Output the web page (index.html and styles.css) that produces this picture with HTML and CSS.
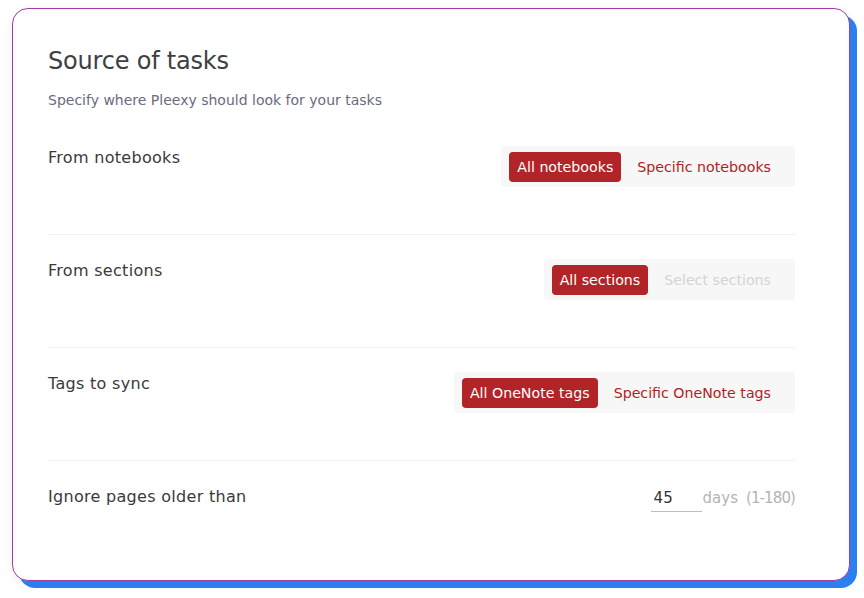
FILE: index.html
```html
<!DOCTYPE html>
<html lang="en">
<head>
    <meta charset="UTF-8">
    <meta name="viewport" content="width=device-width, initial-scale=1.0">
    <title>Source of tasks</title>
    <link rel="stylesheet" href="styles.css">
</head>
<body>
    <div class="card">
        <div class="card-header">
            <h2>Source of tasks</h2>
            <p class="subtitle">Specify where Pleexy should look for your tasks</p>
        </div>

        <div class="setting-row">
            <div class="setting-label">From notebooks</div>
            <div class="segmented">
                <button class="segment active">All notebooks</button>
                <button class="segment">Specific notebooks</button>
            </div>
        </div>

        <div class="setting-row">
            <div class="setting-label">From sections</div>
            <div class="segmented">
                <button class="segment active">All sections</button>
                <button class="segment disabled">Select sections</button>
            </div>
        </div>

        <div class="setting-row">
            <div class="setting-label">Tags to sync</div>
            <div class="segmented">
                <button class="segment active">All OneNote tags</button>
                <button class="segment">Specific OneNote tags</button>
            </div>
        </div>

        <div class="setting-row last">
            <div class="setting-label">Ignore pages older than</div>
            <div class="days-field">
                <input type="text" class="days-input" value="45">
                <span class="days-unit">days</span>
                <span class="days-range">(1-180)</span>
            </div>
        </div>
    </div>
</body>
</html>
```

FILE: styles.css
```css
body {
    font-family: "DejaVu Sans", sans-serif;
    margin: 0;
    padding: 8px 0 17px 12px;
    background-color: #ffffff;
}
.card {
    width: 838px;
    height: 573px;
    box-sizing: border-box;
    padding: 0 54px 0 35px;
    background-color: white;
    border: 1px solid #a23aa8;
    border-radius: 16px;
    box-shadow: 7px 7px 0 #2a80ee, 0 2px 10px rgba(0,0,0,0.08);
}
.card-header {
    padding-top: 38px;
}
.card-header h2 {
    margin: 0;
    font-size: 24px;
    font-weight: normal;
    color: #3d4144;
    letter-spacing: -0.2px;
}
.subtitle {
    margin: 17px 0 0;
    font-size: 14px;
    color: #6b6a80;
}
.setting-row {
    display: flex;
    justify-content: space-between;
    align-items: flex-start;
    padding: 38px 0 47px;
    border-bottom: 1px solid #f0f0f0;
}
.setting-row + .setting-row {
    padding-top: 24px;
}
.setting-row.last {
    border-bottom: none;
}
.setting-label {
    font-size: 16px;
    letter-spacing: 0.3px;
    color: #3a3a3a;
    padding-top: 2px;
}
.segmented {
    display: flex;
    gap: 8px;
    background-color: #f7f7f7;
    border-radius: 4px;
    padding: 6px 16px 5px 8px;
}
.segment {
    font-family: inherit;
    font-size: 14.2px;
    height: 30px;
    padding: 0 8px;
    border: none;
    border-radius: 4px;
    background: none;
    color: #b01e23;
    cursor: pointer;
}
.segment.active {
    background-color: #b12428;
    color: white;
}
.segment.disabled {
    color: #d4d4d4;
    cursor: default;
}
.days-field {
    display: flex;
    align-items: baseline;
    padding-top: 4px;
    color: #b4b4b4;
    font-size: 15px;
}
.days-input {
    width: 51px;
    box-sizing: border-box;
    border: none;
    border-bottom: 1px solid #bdbdbd;
    padding: 0 2px 4px 3px;
    font-family: inherit;
    font-size: 15px;
    color: #333;
    outline: none;
}
.days-unit {
    margin-left: 1px;
}
.days-range {
    margin-left: 8px;
    letter-spacing: -0.9px;
}
```
